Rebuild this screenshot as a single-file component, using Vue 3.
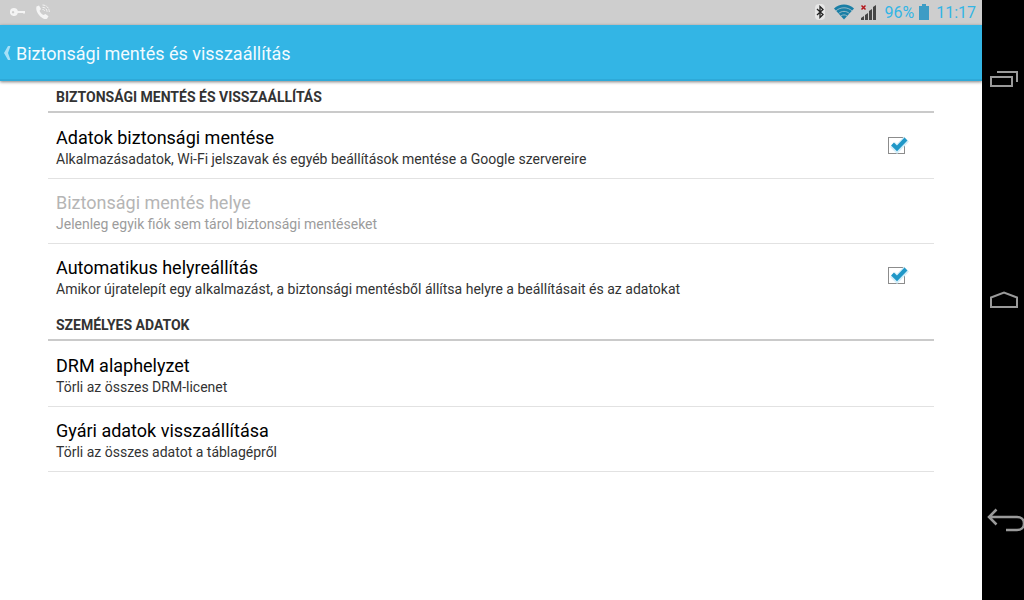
<script setup>
import { reactive } from 'vue'

const sections = reactive([
  {
    title: 'BIZTONSÁGI MENTÉS ÉS VISSZAÁLLÍTÁS',
    items: [
      {
        id: 'backup-data',
        title: 'Adatok biztonsági mentése',
        summary: 'Alkalmazásadatok, Wi-Fi jelszavak és egyéb beállítások mentése a Google szervereire',
        toggle: true,
        checked: true
      },
      {
        id: 'backup-account',
        title: 'Biztonsági mentés helye',
        summary: 'Jelenleg egyik fiók sem tárol biztonsági mentéseket',
        disabled: true
      },
      {
        id: 'auto-restore',
        title: 'Automatikus helyreállítás',
        summary: 'Amikor újratelepít egy alkalmazást, a biztonsági mentésből állítsa helyre a beállításait és az adatokat',
        toggle: true,
        checked: true
      }
    ]
  },
  {
    title: 'SZEMÉLYES ADATOK',
    items: [
      { id: 'drm-reset', title: 'DRM alaphelyzet', summary: 'Törli az összes DRM-licenet' },
      { id: 'factory-reset', title: 'Gyári adatok visszaállítása', summary: 'Törli az összes adatot a táblagépről' }
    ]
  }
])
</script>

<template>
  <div class="device">
    <div class="screen">
      <div class="status">
        <div class="notifications">
          <svg width="16" height="10" viewBox="0 0 16 10">
            <path fill="#f4f4f4" fill-rule="evenodd" d="M4 1a4 4 0 0 1 3.900 3H15v2.500h-2V6H7.800A4 4 0 1 1 4 1zM3 4a1.200 1.200 0 1 0 .1 0z" />
          </svg>
          <svg width="16" height="16" viewBox="0 0 16 16">
            <path fill="#f4f4f4" d="M1.500 2.500 4 1.500 6 5 4.500 6.800c.8 2 2 3.300 4 4.200L10.500 10l3 2.200-1.500 2.600c-2 .6-4.300-.3-6.700-2.400C2.300 9.500.6 5.500 1.500 2.500z" />
            <path fill="none" stroke="#f4f4f4" stroke-width="1" d="M7.500 5.500c1.500 0 2.500 1 2.500 2.500M7.500 3.300c2.800 0 4.600 2 4.600 4.700M7.500 1c4 0 6.800 3 6.800 7" stroke-dasharray="3 1" />
          </svg>
        </div>
        <div class="indicators">
          <svg class="bluetooth" width="10" height="16" viewBox="0 0 10 16">
            <rect width="10" height="16" rx="4" fill="#e6e6e6" />
            <path fill="none" stroke="#222" stroke-width="1.300" d="M2 5l6 5.500L5 13.500V2.500L8 5.500 2 11" />
          </svg>
          <svg class="wifi" width="20" height="16" viewBox="0 0 20 16">
            <path fill="#1a7fa6" d="M0 4.500C5.500-.8 14.500-.8 20 4.500L10 15.500z" />
            <path fill="none" stroke="#b4c6cd" stroke-width=".8" d="M2 6.800c4.500-4 11.500-4 16 0M4.500 9.500c3.200-2.800 7.800-2.800 11 0M6.800 12c2-1.500 4.400-1.500 6.400 0" />
          </svg>
          <svg class="signal" width="17" height="17" viewBox="0 0 17 17">
            <path fill="#444" d="M1 16v-2l3-2v4zM5 16v-5l3-2v7zM9 16V7l3-2v11zM13 16V3l3-2v15z" />
            <path stroke="#b3161b" stroke-width="1.500" d="M1.500 1.500l4 4M5.500 1.500l-4 4" />
          </svg>
          <span class="percent">96%</span>
          <svg class="battery" width="10" height="16" viewBox="0 0 10 16">
            <path fill="#3d9cc5" d="M3 0h4v2h3v14H0V2h3z" />
          </svg>
          <span>11:17</span>
        </div>
      </div>

      <header class="bar">
        <button class="up" type="button">
          <svg width="8" height="16" viewBox="0 0 8 16" aria-hidden="true">
            <path fill="#a6e0f7" d="M5 1h2.500L5 8l2.500 7H5L1 8z" />
          </svg>
          <span>Biztonsági mentés és visszaállítás</span>
        </button>
      </header>

      <main class="list">
        <section v-for="section in sections" :key="section.title">
          <h2>{{ section.title }}</h2>
          <component
            :is="item.toggle ? 'label' : 'button'"
            v-for="item in section.items"
            :key="item.id"
            class="item"
            :for="item.toggle ? item.id : undefined"
            :type="item.toggle ? undefined : 'button'"
            :disabled="item.disabled"
          >
            <span class="text">
              <span class="title">{{ item.title }}</span>
              <span class="summary">{{ item.summary }}</span>
            </span>
            <span v-if="item.toggle" class="check">
              <input :id="item.id" v-model="item.checked" type="checkbox" />
              <svg v-if="item.checked" width="22" height="20" viewBox="0 0 22 20" aria-hidden="true">
                <path class="glow" d="M4.500 9.500 9 14 18.500 4" />
                <path class="tick" d="M4.500 9 9 13.500 18 4" />
              </svg>
            </span>
          </component>
        </section>
      </main>
    </div>

    <nav class="keys">
      <button type="button" aria-label="Legutóbbi alkalmazások">
        <svg width="28" height="16" viewBox="0 0 28 16">
          <path fill="none" stroke="#9a9a9a" stroke-width="2" d="M1 6h21v9H1zM7 1h20v10" />
        </svg>
      </button>
      <button type="button" aria-label="Kezdőlap">
        <svg width="28" height="18" viewBox="0 0 28 18">
          <path fill="none" stroke="#9a9a9a" stroke-width="2" d="M1 16V6.500l13-5L27 6.500V16z" />
        </svg>
      </button>
      <button type="button" aria-label="Vissza">
        <svg class="back" width="37" height="24" viewBox="0 0 37 24">
          <path fill="none" stroke="#9a9a9a" stroke-width="2.500" d="M9.500 1.500 2 9l7.500 7.500M2 9h28c4 0 7 2.500 7 6.500S34 22 30 22H19" />
        </svg>
      </button>
    </nav>
  </div>
</template>

<style>
body {
  margin: 0;
  background: #fff;
}
</style>

<style scoped>
.device {
  display: flex;
  min-height: 100vh;
  font-family: Roboto, "Liberation Sans", sans-serif;
  color: #000;
}
button {
  border: 0;
  padding: 0;
  background: none;
  font: inherit;
  color: inherit;
  text-align: left;
}
svg {
  display: block;
  flex: none;
}
.screen {
  flex: 1;
  min-width: 0;
  background: #fff;
}
.status {
  display: flex;
  justify-content: space-between;
  align-items: center;
  box-sizing: border-box;
  height: 25px;
  padding: 0 6px 1px 10px;
  background: #cecece;
  color: #33b5e5;
  font-size: 16px;
}
.notifications,
.indicators {
  display: flex;
  align-items: center;
}
.notifications {
  gap: 9px;
}
.wifi {
  margin-left: 9px;
}
.signal {
  margin-left: 6px;
}
.percent {
  margin-left: 7px;
}
.battery {
  margin: 0 7px 0 5px;
}
.bar {
  display: flex;
  height: 54px;
  border-bottom: 2px solid #2ea9d8;
  background: #33b5e5;
  box-shadow: 0 1px 3px rgba(0, 0, 0, 0.5);
  color: #f2fbff;
}
.up {
  display: flex;
  align-items: center;
  gap: 5px;
  padding: 2px 0 0 3px;
  font-size: 18px;
}
.list {
  padding: 0 48px;
}
h2 {
  box-sizing: border-box;
  height: 32px;
  margin: 0 0 1px;
  padding: 0 8px;
  border-bottom: 2px solid #cacaca;
  color: #333;
  font-size: 14px;
  font-weight: 700;
  line-height: 32px;
}
.item {
  display: flex;
  align-items: center;
  box-sizing: border-box;
  width: 100%;
  height: 65px;
  padding: 0 24px 0 8px;
  border-bottom: 1px solid #e2e2e2;
}
section:not(:last-child) .item:last-child {
  border-bottom-color: transparent;
}
.text {
  display: flex;
  flex: 1;
  flex-direction: column;
  padding-top: 2px;
}
.title {
  font-size: 18px;
  line-height: 24px;
}
.summary {
  color: #333;
  font-size: 14px;
  line-height: 19px;
}
.item:disabled .title {
  color: #b5b5b5;
}
.item:disabled .summary {
  color: #9c9c9c;
}
.check {
  display: grid;
  align-items: center;
  padding-bottom: 2px;
}
.check > * {
  grid-area: 1 / 1;
}
.check input {
  appearance: none;
  box-sizing: border-box;
  width: 17px;
  height: 17px;
  margin: 0;
  border: 1px solid #8c8c8c;
  background: #fff;
}
.check svg {
  z-index: 1;
  pointer-events: none;
}
.glow,
.tick {
  fill: none;
  stroke: #d3eef9;
  stroke-width: 7px;
}
.tick {
  stroke: #1f97c7;
  stroke-width: 4px;
}
.keys {
  display: flex;
  flex: none;
  flex-direction: column;
  justify-content: space-between;
  box-sizing: border-box;
  width: 42px;
  padding: 59px 0 60px;
  background: #000;
}
.keys button {
  display: flex;
  align-items: center;
  justify-content: center;
  height: 40px;
  padding-left: 2px;
}
.back {
  margin-left: 3px;
}
</style>
